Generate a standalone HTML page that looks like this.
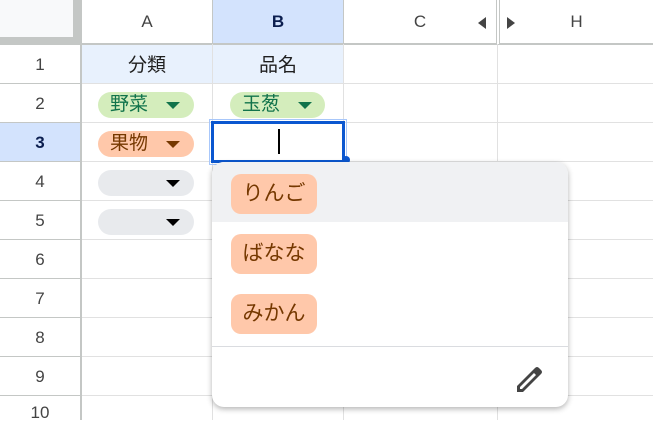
<!DOCTYPE html>
<html><head><meta charset="utf-8"><style>
*{margin:0;padding:0;box-sizing:border-box}
body{width:653px;height:420px;overflow:hidden;background:#fff;position:relative;font-family:"Liberation Sans","Noto Sans CJK JP",sans-serif;color:#1f1f1f}
.a{position:absolute}
.hl{position:absolute;height:1px;background:#e1e1e1}
.vl{position:absolute;width:1px;background:#e1e1e1}
.rn{position:absolute;left:0;width:80px;height:38px;text-align:center;line-height:40px;font-size:17px;color:#444}
.ch{position:absolute;top:0;height:43px;line-height:44px;text-align:center;font-size:17px;color:#444}
.chip{position:absolute;height:26px;border-radius:13px;font-size:19px;line-height:25px;padding-left:12px}
.tri{position:absolute;width:0;height:0;border-left:7px solid transparent;border-right:7px solid transparent;border-top:7px solid}
.opt{position:absolute;left:231px;width:86px;height:40px;border-radius:10px;background:#ffc8aa;color:#753800;font-size:21px;line-height:40px;text-align:center}
</style></head><body>
<div class="a" style="left:0;top:0;width:81px;height:44px;background:#c4c7c5"></div>
<div class="a" style="left:0;top:0;width:73px;height:37px;background:#f8f9fa"></div>
<div class="a" style="left:213px;top:0;width:130px;height:43px;background:#d3e3fd"></div>
<div class="a" style="left:82px;top:45px;width:261px;height:38px;background:#e8f1fd"></div>
<div class="a" style="left:0;top:123px;width:80px;height:38px;background:#d3e3fd"></div>
<div class="hl" style="left:0;top:43px;width:653px;height:2px;background:#c4c7c5"></div>
<div class="hl" style="left:0;top:83px;width:653px"></div>
<div class="hl" style="left:0;top:122px;width:653px"></div>
<div class="hl" style="left:0;top:161px;width:653px"></div>
<div class="hl" style="left:0;top:200px;width:653px"></div>
<div class="hl" style="left:0;top:239px;width:653px"></div>
<div class="hl" style="left:0;top:278px;width:653px"></div>
<div class="hl" style="left:0;top:317px;width:653px"></div>
<div class="hl" style="left:0;top:356px;width:653px"></div>
<div class="hl" style="left:0;top:395px;width:653px"></div>
<div class="hl" style="left:0;top:83px;width:81px;background:#c4c7c5"></div>
<div class="hl" style="left:0;top:122px;width:81px;background:#c4c7c5"></div>
<div class="hl" style="left:0;top:161px;width:81px;background:#c4c7c5"></div>
<div class="hl" style="left:0;top:200px;width:81px;background:#c4c7c5"></div>
<div class="hl" style="left:0;top:239px;width:81px;background:#c4c7c5"></div>
<div class="hl" style="left:0;top:278px;width:81px;background:#c4c7c5"></div>
<div class="hl" style="left:0;top:317px;width:81px;background:#c4c7c5"></div>
<div class="hl" style="left:0;top:356px;width:81px;background:#c4c7c5"></div>
<div class="hl" style="left:0;top:395px;width:81px;background:#c4c7c5"></div>
<div class="vl" style="left:80px;top:0;height:420px;width:2px;background:#c4c7c5"></div>
<div class="vl" style="left:212px;top:44px;height:376px"></div>
<div class="vl" style="left:343px;top:44px;height:376px"></div>
<div class="vl" style="left:497px;top:44px;height:376px"></div>
<div class="vl" style="left:212px;top:0;height:44px;background:#c4c7c5"></div>
<div class="vl" style="left:343px;top:0;height:44px;background:#c4c7c5"></div>
<div class="vl" style="left:496px;top:0;height:44px;width:4px;border-left:1px solid #c4c7c5;border-right:1px solid #c4c7c5;background:#fff"></div>
<div class="ch" style="left:82px;width:130px">A</div>
<div class="ch" style="left:213px;width:130px;color:#0b1e4f;font-weight:bold">B</div>
<div class="ch" style="left:344px;width:152px">C</div>
<div class="ch" style="left:500px;width:153px">H</div>
<div class="a" style="left:478px;top:17px;border-top:6px solid transparent;border-bottom:6px solid transparent;border-right:8px solid #444"></div>
<div class="a" style="left:507px;top:17px;border-top:6px solid transparent;border-bottom:6px solid transparent;border-left:8px solid #444"></div>
<div class="rn" style="top:45px">1</div>
<div class="rn" style="top:84px">2</div>
<div class="rn" style="top:123px;color:#0b1e4f;font-weight:bold">3</div>
<div class="rn" style="top:162px">4</div>
<div class="rn" style="top:201px">5</div>
<div class="rn" style="top:240px">6</div>
<div class="rn" style="top:279px">7</div>
<div class="rn" style="top:318px">8</div>
<div class="rn" style="top:357px">9</div>
<div class="rn" style="top:396px;line-height:34px">10</div>
<div class="a" style="left:82px;top:45px;width:130px;height:38px;line-height:42px;text-align:center;font-size:19px">分類</div>
<div class="a" style="left:213px;top:45px;width:130px;height:38px;line-height:42px;text-align:center;font-size:19px">品名</div>
<div class="chip" style="left:98px;top:92px;width:96px;background:#d4edbc;color:#11734b">野菜<div class="tri" style="left:68px;top:10px;border-top-color:#11734b"></div></div>
<div class="chip" style="left:230px;top:92px;width:95px;background:#d4edbc;color:#11734b">玉葱<div class="tri" style="left:68px;top:10px;border-top-color:#11734b"></div></div>
<div class="chip" style="left:98px;top:131px;width:96px;background:#ffc8aa;color:#753800">果物<div class="tri" style="left:68px;top:10px;border-top-color:#753800"></div></div>
<div class="chip" style="left:98px;top:170px;width:96px;background:#e8eaed"><div class="tri" style="left:68px;top:10px;border-top-color:#000"></div></div>
<div class="chip" style="left:98px;top:209px;width:96px;background:#e8eaed"><div class="tri" style="left:68px;top:10px;border-top-color:#000"></div></div>
<div class="a" style="left:209px;top:119px;width:138px;height:46px;border:1px solid #a8c7fa"></div>
<div class="a" style="left:211px;top:121px;width:134px;height:42px;border:3px solid #0b57d0;background:#fff"></div>
<div class="a" style="left:278px;top:129px;width:2px;height:25px;background:#000"></div>
<div class="a" style="left:342px;top:156px;width:8px;height:8px;border-radius:50%;background:#0b57d0"></div>
<div class="a" style="left:212px;top:162px;width:356px;height:245px;background:#fff;border-radius:12px;box-shadow:0 2px 6px rgba(0,0,0,.3);overflow:hidden">
<div class="a" style="left:0;top:0;width:356px;height:60px;background:#f0f1f3"></div>
<div class="a" style="left:0;top:184px;width:356px;height:1px;background:#dadce0"></div>
</div>
<div class="opt" style="top:174px">りんご</div>
<div class="opt" style="top:234px">ばなな</div>
<div class="opt" style="top:294px">みかん</div>
<svg class="a" style="left:515px;top:364px" width="30" height="30" viewBox="0 0 30 30"><path d="M2 28 L2 22 L20 4 Q22 2 24 4 L26 6 Q28 8 26 10 L8 28 Z M5 23 L5 25 L7 25 L21 11 L19 9 Z" fill="#444" fill-rule="evenodd"/></svg>
</body></html>
